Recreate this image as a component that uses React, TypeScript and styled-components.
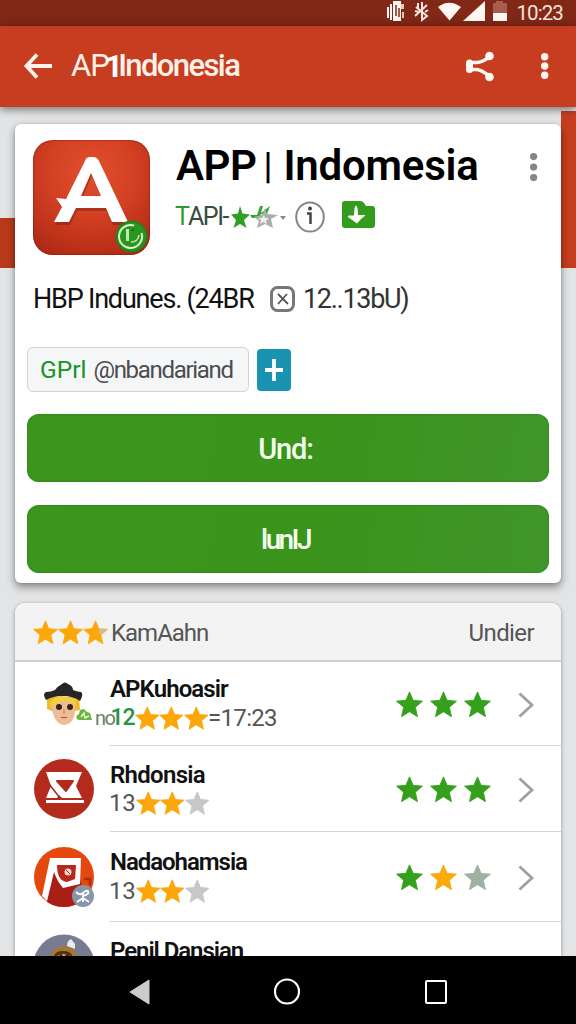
import React from "react";
import styled, { createGlobalStyle } from "styled-components";

const GlobalStyle = createGlobalStyle`
  * { box-sizing: border-box; }
  body { margin: 0; background: #e3e4e6; font-family: Roboto, "Liberation Sans", sans-serif; }
  svg { display: block; flex: none; overflow: visible; }
`;

const Screen = styled.div`
  width: 576px;
  height: 1024px;
  display: flex;
  flex-direction: column;
  overflow: hidden;
`;

const StatusBar = styled.header`
  height: 26px;
  flex: none;
  display: flex;
  align-items: center;
  justify-content: flex-end;
  padding: 0 13px 0 0;
  background: #822817;
`;

const AppBar = styled.div`
  height: 81px;
  flex: none;
  display: flex;
  align-items: center;
  padding: 0 28px 1px 24px;
  background: #c63e1f;
  box-shadow: 0 2px 9px rgba(0, 0, 0, 0.55);
  z-index: 1;
`;

const BarActions = styled.div`
  display: flex;
  align-items: center;
  gap: 47px;
`;

const Content = styled.main`
  flex: 1;
  min-height: 0;
  overflow: hidden;
  display: flex;
  flex-direction: column;
  gap: 20px;
  padding: 17px 15px 0;
  background:
    linear-gradient(#b93a19, #b93a19) 0 111px / 20px 50px no-repeat,
    linear-gradient(#c53f1f, #c53f1f) 561px 4px / 15px 157px no-repeat,
    #e3e4e6;
`;

const Text = styled.span<{
  $size: number;
  $weight?: number;
  $color?: string;
  $spacing?: number;
  $line?: number;
  $ml?: number;
}>`
  font-size: ${(p) => p.$size}px;
  font-weight: ${(p) => p.$weight ?? 400};
  color: ${(p) => p.$color ?? "#111"};
  letter-spacing: ${(p) => p.$spacing ?? 0}px;
  line-height: ${(p) => p.$line ?? 28}px;
  margin-left: ${(p) => p.$ml ?? 0}px;
  white-space: pre;
`;

const BarTitle = styled.h1`
  flex: 1;
  display: flex;
  margin: 0 0 0 19px;
`;

const Card = styled.section`
  width: 546px;
  height: 459px;
  flex: none;
  padding: 16px 12px 0;
  background: #fefefe;
  border-radius: 6px;
  box-shadow: 0 4px 8px rgba(0, 0, 0, 0.42), 0 0 3px rgba(0, 0, 0, 0.15);
`;

const AppSummary = styled.div`
  display: flex;
  height: 115px;
  padding-left: 6px;
`;

const AppIcon = styled.div`
  position: relative;
  width: 117px;
  height: 115px;
  flex: none;
  border-radius: 20px;
  background: radial-gradient(circle at 50% 28%, #e2502f 0%, #d23f22 45%, #a82511 100%);
  box-shadow: inset 0 0 2px rgba(70, 0, 0, 0.7);
`;

const AppBadge = styled.div`
  position: absolute;
  right: 2px;
  bottom: 2px;
`;

const AppHeading = styled.div`
  flex: 1;
  padding-left: 26px;
`;

const AppName = styled.h2`
  margin: 0;
  height: 52px;
  display: flex;
  align-items: center;
`;

const MetaRow = styled.div`
  display: flex;
  align-items: center;
  height: 49px;
`;

const MetaIcons = styled.div`
  display: flex;
  align-items: center;
  gap: 17px;
  margin-left: 9px;
`;

const MetaStars = styled.div`
  margin-left: 4px;
`;

const MoreButton = styled.div`
  padding: 13px 12px 0 0;
`;

const Description = styled.p`
  display: flex;
  align-items: center;
  height: 30px;
  margin: 29px 0 0 6px;
`;

const DescriptionLead = styled.span`
  width: 237px;
  flex: none;
  display: flex;
`;

const TagRow = styled.div`
  display: flex;
  align-items: center;
  gap: 8px;
  margin: 33px 0 22px;
`;

const Chip = styled.div`
  width: 222px;
  height: 45px;
  display: flex;
  align-items: center;
  padding-left: 12px;
  border: 1.5px solid #d3d4d6;
  border-radius: 6px;
  background: #f5f6f7;
`;

const PlusButton = styled.div`
  width: 34px;
  height: 42px;
  display: grid;
  place-items: center;
  border-radius: 4px;
  background: #1a93b0;
`;

const ActionButton = styled.div`
  width: 522px;
  height: 68px;
  display: flex;
  align-items: center;
  justify-content: center;
  padding: 2px 5px 0 0;
  border-radius: 12px;
  background: linear-gradient(100deg, #3c961d, #3a931b 55%, #40962a);
  box-shadow: inset 0 0 2px #1e7414;
  & + & { margin-top: 23px; }
`;

const ListCard = styled.section`
  width: 546px;
  flex: none;
  background: #fff;
  border-radius: 10px 10px 0 0;
  box-shadow: 0 1px 4px rgba(0, 0, 0, 0.35);
`;

const ListHeader = styled.div`
  height: 59px;
  display: flex;
  align-items: center;
  padding: 2px 27px 0 18px;
  border-radius: 10px 10px 0 0;
  border-bottom: 2px solid #d0d1d5;
  background: #f3f3f4;
`;

const Spacer = styled.div`
  flex: 1;
`;

const Row = styled.div<{ $height: number }>`
  display: flex;
  height: ${(p) => p.$height}px;
`;

const AvatarSlot = styled.div<{ $top: number }>`
  width: 95px;
  flex: none;
  padding: ${(p) => p.$top}px 0 0 18px;
`;

const RowBody = styled.div`
  flex: 1;
  display: flex;
  border-bottom: 1.5px solid #d4d4d6;
`;

const RowText = styled.div<{ $top: number; $gap: number }>`
  flex: 1;
  display: flex;
  flex-direction: column;
  gap: ${(p) => p.$gap}px;
  padding-top: ${(p) => p.$top}px;
`;

const RatingLine = styled.div`
  display: flex;
  align-items: center;
  height: 28px;
`;

const RowEnd = styled.div`
  display: flex;
  align-items: center;
  gap: 7px;
  padding: 2px 27px 0 0;
  & > :last-child { margin-left: 20px; }
`;

const NavBar = styled.nav`
  height: 68px;
  flex: none;
  display: flex;
  align-items: center;
  justify-content: center;
  gap: 124.5px;
  padding: 3px 1px 0 0;
  background: #000;
  z-index: 1;
`;

const GREEN = "#35a01c";
const GOLD = "#fba70a";
const GREY = "#c5c7c9";

function Star({ size, color, half }: { size: number; color: string; half?: boolean }) {
  const d = "M12 .8 15.2 8.3 23.5 9 17.2 14.4 19.1 22.8 12 18.4 4.9 22.8 6.8 14.4 .5 9 8.8 8.3Z";
  return (
    <svg width={size} height={size} viewBox="0 0 24 24">
      <path d={d} fill={color} stroke={color} strokeWidth=".8" strokeLinejoin="round" />
      {half && <path d="M15.2 8.3 23.5 9 17.2 14.4 15.5 12Z" fill="#cdbf9e" />}
    </svg>
  );
}

function Dots({ color, r, gap }: { color: string; r: number; gap: number }) {
  const h = r * 2 + gap * 2;
  return (
    <svg width={r * 2} height={h} viewBox={`0 0 ${r * 2} ${h}`} fill={color}>
      {[0, 1, 2].map((i) => (
        <circle key={i} cx={r} cy={r + i * gap} r={r} />
      ))}
    </svg>
  );
}

function StatusIcons() {
  return (
    <svg width="122" height="24" viewBox="386 1 122 24" fill="#fff7f2">
      <path d="M387 7h2v11h-2zM390 4h2v16h-2zM393 1h8v20h-8z" />
      <path d="M401 4h3v5h-3zM402 12h2v6h-2z" fill="#e9c4b6" />
      <path d="M396 5v11M399 8v9" stroke="#7b2b1c" strokeWidth="1.5" />
      <path d="M422 2v18l5-4-11-9M427 5l-12 11M425 12l3-2M418 3v5M415 11l4 1" fill="none" stroke="#f7e6dd" strokeWidth="2" />
      <path d="M438 7Q449-1.500 461 7L449.500 20.500Z" />
      <path d="M463 21 485 1v20z" />
      <path d="M493 3h3V1h7v2h4v10h-14z" fill="#a65f4e" />
      <path d="M493 13h14v8h-14z" />
    </svg>
  );
}

function BackArrow() {
  return (
    <svg width="28" height="26" viewBox="0 0 28 26" fill="none" stroke="#fff3ec" strokeWidth="3.8">
      <path d="M13 1.500 2.500 13 13 24.500M3 13h25" />
    </svg>
  );
}

function ShareIcon() {
  return (
    <svg width="28" height="31" viewBox="0 0 28 31" fill="#fff8f4">
      <path d="M24 5q-6 6-13 6.500H5v7h6q6 1 13 7.500" fill="none" stroke="#fff8f4" strokeWidth="3.400" strokeLinejoin="round" />
      <circle cx="23.500" cy="5" r="4.300" />
      <circle cx="23.500" cy="26" r="4.300" />
      <rect x="0" y="8.500" width="7" height="13.500" rx="3.500" />
    </svg>
  );
}

function LetterMark() {
  const d = "M52 21q1-4 5-4h3q4 0 6 4l29 61H79l-6-14H43l-7 14H21l8-15-6-9 10 1Zm6 12L48 56h20Z";
  return (
    <svg width="117" height="115" viewBox="0 0 117 115">
      <path d={d} fill="#5e160b" opacity=".35" transform="translate(1 3)" fillRule="evenodd" />
      <path d={d} fill="#fff" fillRule="evenodd" />
    </svg>
  );
}

function PowerBadge() {
  return (
    <svg width="33" height="33" viewBox="0 0 33 33">
      <circle cx="16.500" cy="16.500" r="16" fill="#23841c" />
      <circle cx="16.500" cy="16.500" r="14" fill="#2b951f" />
      <path d="M26.500 13A11.500 11.500 0 1 1 19 5.500" fill="none" stroke="#d9f5cf" strokeWidth="2" />
      <path d="M12.500 9v12" fill="none" stroke="#bfe9b2" strokeWidth="3" />
      <path d="M18 9v2" fill="none" stroke="#14690f" strokeWidth="2" />
      <path d="M16 22q7 0 8-7" fill="none" stroke="#bfe9b2" strokeWidth="1.600" />
    </svg>
  );
}

function BrokenStars() {
  return (
    <svg width="54" height="26" viewBox="0 0 54 26">
      <path d="M8 2 10.500 9.500 18 10.500 12 16 14.500 24 8 20 1.500 24 4 16-1 10.500 6 9.500Z" fill="#2f9f28" />
      <path d="M18 11h7l3-9h3l-2 7 9-7-3 8h-6l-2 4h-7Z" fill="#38a235" />
      <path d="M33 4 35 10 46 11 39 15 41 24 33 20 25 24 27 17 22 13 30 11Z" fill="#a9adab" />
      <path d="M32 11 33 14 37 14 34 17 35 20 31 18 28 20 29 16 26 14 30 14Z" fill="#eef0ee" />
      <path d="M48 12h6l-3 4Z" fill="#858a86" />
    </svg>
  );
}

function InfoIcon() {
  return (
    <svg width="30" height="32" viewBox="0 0 30 32" fill="none" stroke="#858585" strokeWidth="2">
      <ellipse cx="15" cy="16" rx="13.800" ry="14.600" />
      <path d="M12 12.500h3.500v10.500" stroke="#444" strokeWidth="2.500" />
      <circle cx="15" cy="7.500" r="1" stroke="#444" />
    </svg>
  );
}

function FolderDownload() {
  return (
    <svg width="33" height="31" viewBox="0 0 33 31">
      <path d="M3 0h15q3 0 4 2l2 3h6q3 0 3 3v16q0 3-3 3H3q-3 0-3-3V3Q0 0 3 0Z" fill="#339c1d" />
      <path d="M12.500 7q1.500-5 3 0l.5 7h7.500q-2 2-4 3.500L15 22.500 6 16q-1-1 1-1.500h5Z" fill="#fff" />
    </svg>
  );
}

function BoxedX() {
  return (
    <svg width="25" height="26" viewBox="0 0 25 26" fill="none">
      <rect x="1.500" y="1.500" width="22" height="23" rx="6" stroke="#777" strokeWidth="3" />
      <path d="m8 8 10 10M17 8 8 18" stroke="#555" strokeWidth="1.800" />
    </svg>
  );
}

function Plus() {
  return (
    <svg width="18" height="22" viewBox="0 0 18 22">
      <path d="M9 0v22M0 11h18" stroke="#fff" strokeWidth="3.800" />
    </svg>
  );
}

function Chevron() {
  return (
    <svg width="16" height="26" viewBox="0 0 16 26" fill="none" stroke="#a0a0a0" strokeWidth="2.800">
      <path d="m1.500 1.500 12.500 11.500L1.500 24.500" />
    </svg>
  );
}

function CowboyAvatar() {
  return (
    <svg width="62" height="44" viewBox="0 0 62 44">
      <path d="M14 16h32l1 13-6 1H19l-5-2Z" fill="#e9bd27" />
      <path d="M18 22q1-4 8-4h12q5 0 4 12-1 13-11 14-11-1-13-22Z" fill="#edbd98" />
      <path d="M17 24q1-8 12-9l14 3v6l-8-4-9 1-5 4Z" fill="#f2cf3b" />
      <circle cx="26" cy="26" r="3" fill="#3a2119" />
      <circle cx="37" cy="26" r="3" fill="#3a2119" />
      <path d="M28 36.500h6" stroke="#b35645" strokeWidth="1.300" />
      <path d="M31 28v5" stroke="#c89372" strokeWidth="1.500" />
      <path d="M13 19q-4-6 0-8 5 0 9-2 3-4 7-6 3-3 6 0 5 2 5 6 5 2 8 2 3 2-1 9-7-5-17-5t-17 4Z" fill="#262626" />
      <path d="M44 38q-2-3 2-5l1-4 4-1 3 3 3 1 2 7H46Z" fill="#6fb43c" />
      <path d="m48 36 3-4 1 5 4-2" fill="none" stroke="#e7f5dc" strokeWidth="1.500" />
    </svg>
  );
}

function SealAvatar() {
  return (
    <svg width="62" height="62" viewBox="0 0 62 62">
      <circle cx="31" cy="31" r="30" fill="#b42b1e" />
      <path d="M13 14h36l-6 14 6 12H29l-3-3-2 3H13l5-12Z" fill="#fff" />
      <path d="M24 23h16l-7 10Z" fill="#b42b1e" stroke="#b42b1e" strokeWidth="2" strokeLinejoin="round" />
      <path d="m16 26 11 14" stroke="#a32a1f" strokeWidth="1.500" />
      <path d="M13 43.500h38" stroke="#fff" strokeWidth="3" />
    </svg>
  );
}

function PosterAvatar() {
  return (
    <svg width="62" height="62" viewBox="0 0 62 62">
      <circle cx="31" cy="31" r="30" fill="#e4480d" />
      <path d="M21 22 47 34l6 17A30 30 0 0 1 14 56Z" fill="#a91f16" />
      <path d="M17 12h31l-1 26-17 4q-6-7-9-16l-7 29-5-5Z" fill="#fff" />
      <path d="M24 19h19l-1 14-8 3q-10-1-10-17Z" fill="#b8271c" />
      <circle cx="35" cy="26" r="3.500" fill="#f8dcd3" />
      <path d="m33 24 4 4" stroke="#b8271c" />
      <path d="M51 33h6v6" fill="none" stroke="#a52f16" strokeWidth="2.500" />
      <circle cx="50" cy="50" r="11" fill="#8796a8" />
      <path d="M43 46q4 4 7 1t5-2q2 3-5 5m0-3v9m0-4 6 4m-6-4-6 4" fill="none" stroke="#fff" strokeWidth="1.800" />
    </svg>
  );
}

function PortraitAvatar() {
  return (
    <svg width="62" height="62" viewBox="0 0 62 62">
      <circle cx="31" cy="31" r="30.500" fill="#777c91" />
      <path d="M17 24q2-11 14-12 12 1 13 12v16H17Z" fill="#a8762f" />
      <path d="M21 24q0-7 9-7t10 7v15H21Z" fill="#503019" />
      <path d="M24 22q6-4 13 0v15H24Z" fill="#d59b63" />
      <path d="M34 12q0-5 4-7l4 5v5Z" fill="#e9ece9" />
      <circle cx="28" cy="21.500" r="1.500" fill="#39231a" />
      <circle cx="34" cy="21.500" r="1.500" fill="#39231a" />
    </svg>
  );
}

function Stars({ colors, size }: { colors: string[]; size: number }) {
  return (
    <>
      {colors.map((c, i) => (
        <Star key={i} size={size} color={c} />
      ))}
    </>
  );
}

type ListItem = {
  name: string;
  spacing: number;
  height: number;
  top: number;
  gap: number;
  avatarTop: number;
  avatar: React.ReactNode;
  line?: React.ReactNode;
  rating?: string[];
};

const shortRating = (
  <>
    <Text $size={24} $color="#555" $spacing={-0.2} $ml={-1}>13</Text>
    <Stars size={24.5} colors={[GOLD, GOLD, GREY]} />
  </>
);

const items: ListItem[] = [
  {
    name: "APKuhoasir", spacing: -0.9, height: 84, top: 13, gap: 1, avatarTop: 19,
    avatar: <CowboyAvatar />,
    line: (
      <>
        <Text $size={20} $color="#66806b" $ml={-15} $spacing={-1.5}>no</Text>
        <Text $size={23} $color="#269044" $ml={-4} $spacing={-1} $weight={500}>12</Text>
        <Stars size={24.5} colors={[GOLD, GOLD, GOLD]} />
        <Text $size={24} $color="#555" $spacing={-0.7}>=17:23</Text>
      </>
    ),
    rating: [GREEN, GREEN, GREEN],
  },
  {
    name: "Rhdonsia", spacing: -0.7, height: 86, top: 15, gap: 0, avatarTop: 12,
    avatar: <SealAvatar />,
    line: shortRating,
    rating: [GREEN, GREEN, GREEN],
  },
  {
    name: "Nadaohamsia", spacing: -1.05, height: 90, top: 16, gap: 1, avatarTop: 14,
    avatar: <PosterAvatar />,
    line: shortRating,
    rating: [GREEN, "#fca90a", "#9eb2a3"],
  },
  {
    name: "Penil Dansian", spacing: -1.05, height: 88, top: 15, gap: 1, avatarTop: 12,
    avatar: <PortraitAvatar />,
  },
];

export default function App() {
  return (
    <Screen>
      <GlobalStyle />
      <StatusBar>
        <StatusIcons />
        <Text $size={20.5} $color="#f6e4da" $spacing={-0.9} $line={24} $ml={8}>10:23</Text>
      </StatusBar>
      <AppBar>
        <BackArrow />
        <BarTitle>
          <Text $size={31} $color="#fff1e9" $spacing={-1} $line={36}>AP</Text>
          <Text $size={32} $color="#fff" $weight={700} $line={36} $ml={-4}>1</Text>
          <Text $size={31} $color="#fff1e9" $weight={500} $spacing={-1.6} $line={36} $ml={-5}>Indonesia</Text>
        </BarTitle>
        <BarActions>
          <ShareIcon />
          <Dots color="#fff8f4" r={3.7} gap={9.3} />
        </BarActions>
      </AppBar>
      <Content>
        <Card>
          <AppSummary>
            <AppIcon>
              <LetterMark />
              <AppBadge><PowerBadge /></AppBadge>
            </AppIcon>
            <AppHeading>
              <AppName>
                <Text $size={42} $weight={600} $color="#000" $line={50} $spacing={-0.5}>APP</Text>
                <Text $size={36} $weight={500} $color="#000" $line={44} $ml={7}>|</Text>
                <Text $size={42} $weight={600} $color="#000" $line={50} $spacing={-0.2} $ml={11}>Indomesia</Text>
              </AppName>
              <MetaRow>
                <Text $size={25} $color="#2c9a35" $spacing={-2} $ml={-1}>T</Text>
                <Text $size={25} $color="#374c40" $spacing={-1.4}>API-</Text>
                <MetaStars><BrokenStars /></MetaStars>
                <MetaIcons>
                  <InfoIcon />
                  <FolderDownload />
                </MetaIcons>
              </MetaRow>
            </AppHeading>
            <MoreButton><Dots color="#858585" r={3.6} gap={10.5} /></MoreButton>
          </AppSummary>
          <Description>
            <DescriptionLead><Text $size={27} $spacing={-1.2}>HBP Indunes. (24BR</Text></DescriptionLead>
            <BoxedX />
            <Text $size={27} $color="#333" $ml={8} $spacing={-1.3}>12..13bU)</Text>
          </Description>
          <TagRow>
            <Chip>
              <Text $size={24.5} $color="#169322">GPrl</Text>
              <Text $size={24} $color="#4a4d50" $ml={7} $spacing={-1.3}>@nbandariand</Text>
            </Chip>
            <PlusButton><Plus /></PlusButton>
          </TagRow>
          <ActionButton><Text $size={29} $weight={500} $color="#f4ffed" $spacing={-1.1}>Und:</Text></ActionButton>
          <ActionButton><Text $size={28} $weight={500} $color="#f4ffed" $spacing={-2.6}>lunIJ</Text></ActionButton>
        </Card>
        <ListCard>
          <ListHeader>
            <Star size={25} color={GOLD} />
            <Star size={25} color={GOLD} />
            <Star size={25} color={GOLD} half />
            <Text $size={24} $color="#555" $ml={3} $spacing={-1}>KamAahn</Text>
            <Spacer />
            <Text $size={24} $color="#555" $spacing={-0.6}>Undier</Text>
          </ListHeader>
          {items.map((item) => (
            <Row key={item.name} $height={item.height}>
              <AvatarSlot $top={item.avatarTop}>{item.avatar}</AvatarSlot>
              <RowBody>
                <RowText $top={item.top} $gap={item.gap}>
                  <Text $size={24} $weight={600} $spacing={item.spacing}>{item.name}</Text>
                  {item.line && <RatingLine>{item.line}</RatingLine>}
                </RowText>
                {item.rating && (
                  <RowEnd>
                    <Stars size={27} colors={item.rating} />
                    <Chevron />
                  </RowEnd>
                )}
              </RowBody>
            </Row>
          ))}
        </ListCard>
      </Content>
      <NavBar>
        <svg width="21" height="26" viewBox="0 0 21 26"><path d="M20 1v24L1 13Z" fill="#ccc" stroke="#ccc" strokeLinejoin="round" /></svg>
        <svg width="26" height="27" viewBox="0 0 26 27"><circle cx="13" cy="13.500" r="12" fill="none" stroke="#fff" strokeWidth="2.200" /></svg>
        <svg width="22" height="24" viewBox="0 0 22 24"><rect x="1" y="1" width="20" height="22" rx="1" fill="none" stroke="#fff" strokeWidth="2" /></svg>
      </NavBar>
    </Screen>
  );
}
